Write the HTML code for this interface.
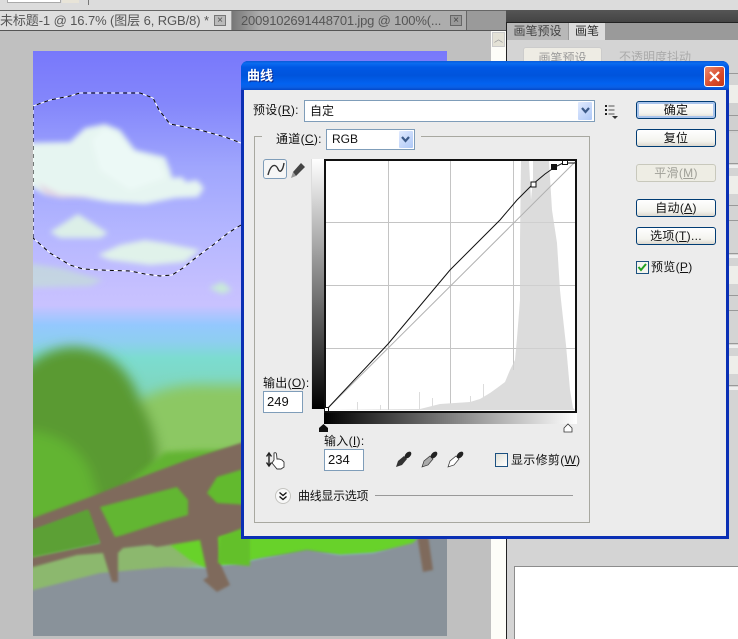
<!DOCTYPE html>
<html><head><meta charset="utf-8"><style>
html,body{margin:0;padding:0;background:#c0c0c0}
#r{position:relative;width:738px;height:639px;overflow:hidden;font:12px/14px "Liberation Sans","WenQuanYi Zen Hei","Noto Sans CJK SC",sans-serif;color:#111}
#r div{position:absolute;box-sizing:border-box;white-space:nowrap}
#r svg{position:absolute;left:0;top:0}
.in{background:#fff;border:1px solid #7f9db9}
.btn{width:80px;height:18px;border:1px solid #003c74;border-radius:3px;background:linear-gradient(#fff,#f3f3ee 70%,#dcd8ce);text-align:center;line-height:16px;left:636px;letter-spacing:.3px}
.dd{width:16px;background:linear-gradient(135deg,#e1eafe,#aec8f7);border:1px solid #fff;border-radius:2px}
.l{letter-spacing:.3px}
u{text-decoration:underline}
</style></head><body><div id="r">
<div style="left:0;top:0;width:738px;height:10px;background:#dcdcdc"></div>
<div style="left:7px;top:0;width:54px;height:3px;background:#fff;border:1px solid #aaa;border-top:0"></div>
<div style="left:62px;top:0;width:17px;height:3px;background:#e8e4d8"></div>
<div style="left:88px;top:0;width:1px;height:5px;background:#777"></div>
<div style="left:0;top:10px;width:506px;height:21px;background:#9a9a9a;border-top:1px solid #666;border-bottom:1px solid #555"></div>
<div style="left:0;top:11px;width:231px;height:19px;background:#dedede;color:#555;font-size:13px;line-height:20px;letter-spacing:-.1px">未标题-1 @ 16.7% (图层 6, RGB/8) *</div>
<div style="left:214px;top:15px;width:12px;height:11px;background:#bbb;border:1px solid #777;color:#555;font-size:10px;line-height:9px;text-align:center">×</div>
<div style="left:232px;top:11px;width:235px;height:19px;background:linear-gradient(90deg,#777,#adadad 12%,#adadad);color:#555;font-size:13px;line-height:20px;padding-left:9px;border-right:1px solid #666;letter-spacing:-.17px">2009102691448701.jpg @ 100%(...</div>
<div style="left:450px;top:15px;width:12px;height:11px;background:#999;border:1px solid #666;color:#444;font-size:10px;line-height:9px;text-align:center">×</div>
<div style="left:0;top:31px;width:491px;height:608px;background:#c0c0c0"></div>

<svg width="738" height="639" viewBox="0 0 738 639">
<defs>
<linearGradient id="sky" x1="0" y1="0" x2="0" y2="1">
<stop offset="0" stop-color="#7878fb"/><stop offset=".09" stop-color="#8487fb"/><stop offset=".2" stop-color="#a0a6fd"/><stop offset=".31" stop-color="#b4b6ff"/><stop offset=".41" stop-color="#c6c0ff"/><stop offset=".435" stop-color="#c8c2ff"/><stop offset=".468" stop-color="#94c8fe"/><stop offset=".497" stop-color="#8ecef0"/><stop offset=".525" stop-color="#7cdcd0"/><stop offset=".6" stop-color="#80d4b8"/><stop offset="1" stop-color="#80d4b8"/>
</linearGradient>
<filter id="b6" x="-20%" y="-20%" width="140%" height="140%"><feGaussianBlur stdDeviation="6"/></filter>
<filter id="b3" x="-20%" y="-20%" width="140%" height="140%"><feGaussianBlur stdDeviation="3"/></filter>
<filter id="b2" x="-20%" y="-20%" width="140%" height="140%"><feGaussianBlur stdDeviation="2.6"/></filter>
<filter id="b1" x="-20%" y="-20%" width="140%" height="140%"><feGaussianBlur stdDeviation="1.4"/></filter>
<clipPath id="img"><rect x="33" y="51" width="414" height="585"/></clipPath>
</defs>
<g clip-path="url(#img)">
<rect x="33" y="51" width="414" height="585" fill="url(#sky)"/>
<!-- clouds -->
<g filter="url(#b2)">
<path d="M20 143 L70 142 L85 128 L105 124 L120 130 L135 150 L165 157 L170 170 L172 178 L182 177 L186 182 L197 180 L204 188 L198 197 L175 198 L145 204 L110 202 L85 198 L60 197 L45 195 L20 180Z" fill="#e6f5f1"/>
<path d="M92 140 L105 128 L118 135 L130 150 L160 162 L165 178 L130 190 L100 170Z" fill="#ecf9f6"/>
<path d="M38 183 L60 194 L100 197 L60 198 L45 195Z" fill="#e2d6e4"/>
<path d="M50 232 L78 214 L108 233 L100 238 L60 238Z" fill="#dcefe8"/>
<path d="M98 255 L120 245 L145 240 L165 243 L200 250 L185 262 L150 265 L110 260Z" fill="#e0f2ea"/>
<path d="M33 264 L60 268 L103 280 L90 286 L20 288 L20 264Z" fill="#c4dcd8" opacity=".75"/>
<path d="M209 288 L222 282 L232 290 L222 294Z" fill="#c8ead8"/>
</g>
<!-- hills -->
<g filter="url(#b6)">
<path d="M140 400 Q170 383 210 385 L460 385 L460 520 L130 520Z" fill="#8cc864"/>
<path d="M15 380 Q40 347 75 347 Q122 350 140 400 Q165 440 158 490 L120 520 L15 530Z" fill="#5a9a32"/>
<path d="M15 430 Q70 430 90 470 L102 510 L15 530Z" fill="#62b432"/>
</g>
<path d="M125 485 L165 452 L200 450 L250 450 L250 520 L130 530Z" fill="#62b432" filter="url(#b3)"/>
<path d="M20 530 L95 505 L112 540 L20 560Z" fill="#5ca034" filter="url(#b3)"/>
<path d="M90 510 L190 480 L210 520 L110 545Z" fill="#62b630" filter="url(#b1)"/>
<path d="M210 480 L460 400 L460 545 L210 560Z" fill="#62ba2e" filter="url(#b1)"/>
<path d="M15 555 L100 545 L175 540 L210 565 L15 600Z" fill="#8cb86e" filter="url(#b2)"/>
<path d="M170 545 L200 530 L420 520 L420 545 L373 553 L340 555 L307 550 L263 558 L240 563 L205 568 L190 560Z" fill="#68d22c" filter="url(#b1)"/>
<path d="M15 595 L33 590 L100 573 L167 567 L205 568 L240 563 L263 558 L307 550 L340 555 L373 553 L413 543 L425 530 L460 520 L460 650 L15 650Z" fill="#89929a" filter="url(#b1)"/>
<!-- fence -->
<g fill="#7f6b5c" filter="url(#b1)">
<path d="M15 526 L33 518 L90 497 L133 480 L187 460 L250 440 L250 530 L218 537 L220 563 L230 585 L217 592 L203 580 L208 577 L200 540 L157 547 L150 545 L123 548 L118 553 L118 582 L112 582 L103 553 L77 555 L33 567 L15 570 L15 560 L33 557 L100 543 L88 510 L33 530 L15 537Z"/>
<path d="M417 535 L428 535 L433 570 L423 572Z"/>
</g>
<g filter="url(#b1)">
<path d="M100 507 L177 487 L188 500 L188 515 L163 522 L123 535 L115 537Z" fill="#62b630"/>
<path d="M207 493 L217 477 L250 467 L250 505 L217 503Z" fill="#62ba2e"/>
<path d="M220 537 L250 525 L250 566 L218 563Z" fill="#64c02c"/>
<path d="M33 530 L88 510 L100 543 L33 557 L20 560 L20 535Z" fill="#5ca034"/>
</g>
<!-- selection -->
<g fill="none">
<path d="M33 238 L33 106 L50 100 L70 96 L80 93 L140 93 L153 98 L159 110 L170 124 L200 130 L225 137 L241 143 M241 225 L228 233 L213 245 L198 256 L183 268 L172 275 L160 276 L145 274 L130 271 L100 270 L83 269 L70 265 L50 253 L33 238" stroke="#fff"/>
<path d="M33 238 L33 106 L50 100 L70 96 L80 93 L140 93 L153 98 L159 110 L170 124 L200 130 L225 137 L241 143 M241 225 L228 233 L213 245 L198 256 L183 268 L172 275 L160 276 L145 274 L130 271 L100 270 L83 269 L70 265 L50 253 L33 238" stroke="#000" stroke-dasharray="4 4"/>
</g>
</g>
</svg>

<!-- scrollbar + panel -->
<div style="left:491px;top:31px;width:15px;height:608px;background:#fdfdf8"></div>
<div style="left:492px;top:32px;width:13px;height:15px;background:#e4e2d6;border:1px solid #ccc;color:#999;font-size:9px;line-height:12px;text-align:center">︿</div>
<div style="left:506px;top:10px;width:232px;height:13px;background:linear-gradient(#555,#444);border-bottom:1px solid #222"></div>
<div style="left:506px;top:23px;width:232px;height:17px;background:#9a9a9a"></div>
<div style="left:506px;top:23px;width:1px;height:616px;background:#222"></div>
<div style="left:507px;top:23px;width:61px;height:17px;background:#b8b8b8;color:#444;text-align:center;line-height:17px">画笔预设</div>
<div style="left:569px;top:23px;width:36px;height:17px;background:#dcdcdc;color:#333;text-align:center;line-height:17px">画笔</div>
<div style="left:507px;top:40px;width:231px;height:599px;background:#d4d4d4"></div>
<div style="left:523px;top:47px;width:79px;height:20px;background:#eeece4;border:1px solid #ccc;border-radius:3px;color:#999;text-align:center;line-height:20px">画笔预设</div>
<div style="left:619px;top:49px;color:#aaa;line-height:16px">不透明度抖动</div>
<div style="left:514px;top:566px;width:224px;height:73px;background:#fff;border:1px solid #8c8c8c;border-right:0;border-bottom:0"></div>
<!-- right strip -->
<div style="left:729px;top:73px;width:9px;height:1px;background:#999"></div>
<div style="left:729px;top:85px;width:9px;height:18px;background:#eeeeea"></div>
<div style="left:729px;top:103px;width:9px;height:30px;background:#d0d0d0"></div>
<div style="left:729px;top:115px;width:9px;height:1px;background:#999"></div>
<div style="left:729px;top:130px;width:9px;height:1px;background:#999"></div>
<div style="left:729px;top:163px;width:9px;height:1px;background:#999"></div>
<div style="left:729px;top:165px;width:9px;height:3px;background:#eee"></div>
<div style="left:729px;top:176px;width:9px;height:18px;background:#eeeeea"></div>
<div style="left:729px;top:205px;width:9px;height:1px;background:#999"></div>
<div style="left:729px;top:220px;width:9px;height:1px;background:#999"></div>
<div style="left:729px;top:253px;width:9px;height:1px;background:#999"></div>
<div style="left:729px;top:255px;width:9px;height:3px;background:#eee"></div>
<div style="left:729px;top:266px;width:9px;height:18px;background:#eeeeea"></div>
<div style="left:729px;top:295px;width:9px;height:1px;background:#999"></div>
<div style="left:729px;top:310px;width:9px;height:1px;background:#999"></div>
<div style="left:729px;top:343px;width:9px;height:1px;background:#999"></div>
<div style="left:729px;top:345px;width:9px;height:3px;background:#eee"></div>
<div style="left:729px;top:356px;width:9px;height:18px;background:#eeeeea"></div>
<div style="left:729px;top:385px;width:9px;height:1px;background:#999"></div>
<div style="left:729px;top:387px;width:9px;height:3px;background:#eee"></div>

<!-- dialog -->
<div style="left:241px;top:61px;width:488px;height:478px;background:#0a2fb4;border-radius:7px 7px 0 0"></div>
<div style="left:241px;top:61px;width:488px;height:29px;border-radius:7px 7px 0 0;background:linear-gradient(#0a5ad8 0,#0a6cf0 8%,#0058e4 22%,#0054dc 50%,#0262f0 78%,#0a60e6 90%,#0448c8 100%)"></div>
<div style="left:247px;top:68px;color:#fff;font-weight:bold;font-size:13px;line-height:16px;text-shadow:1px 1px 0 #0a2a90">曲线</div>
<div style="left:704px;top:66px;width:21px;height:21px;border-radius:3px;border:1px solid #fff;background:linear-gradient(135deg,#ea8a6c,#d8492a 60%,#c23a18)"></div>
<svg width="738" height="639" viewBox="0 0 738 639"><path d="M710 72 L719 81 M719 72 L710 81" stroke="#fff" stroke-width="2.2"/></svg>
<div style="left:244px;top:90px;width:482px;height:446px;background:#ececec"></div>

<div class="l" style="left:253px;top:103px">预设(<u>R</u>):</div>
<div class="in" style="left:304px;top:100px;width:291px;height:22px;line-height:20px;padding-left:5px">自定</div>
<div class="dd" style="left:577px;top:101px;height:20px"></div>

<div style="left:254px;top:136px;width:336px;height:387px;border:1px solid #a8a8a0"></div>
<div style="left:262px;top:130px;width:159px;height:14px;background:#ececec"></div>
<div class="l" style="left:276px;top:132px">通道(<u>C</u>):</div>
<div class="in" style="left:326px;top:129px;width:89px;height:21px;line-height:19px;padding-left:5px;background:#fff">RGB</div>
<div class="dd" style="left:398px;top:130px;height:19px"></div>

<div style="left:263px;top:159px;width:24px;height:20px;background:#f6f6f6;border:1px solid #7f9db9;border-radius:3px"></div>
<div style="left:311px;top:159px;width:13px;height:250px;background:linear-gradient(#fff,#000);border-left:1px solid #ddd"></div>
<div style="left:324px;top:159px;width:253px;height:254px;background:#fff;border:2px solid #111"></div>
<div style="left:324px;top:413px;width:253px;height:11px;background:linear-gradient(90deg,#000,#fff)"></div>

<svg width="738" height="639" viewBox="0 0 738 639">
<g fill="none" stroke="#c4c4c4"><path d="M388.500 161V410M450.500 161V410M513.500 161V410M326 222.500H575M326 285.500H575M326 348.500H575"/></g>
<path fill="#dcdcdc" d="M326 410 L420 409 L440 404 L470 402 L480 399 L490 393 L497 388 L505 382 L510 370 L515 360 L517 338 L520 300 L520 240 L521 161 L529 161 L531 200 L533 178 L549 161 L552 210 L557 243 L560 290 L561 300 L566 345 L570 390 L573 408 L575 410Z"/>
<path fill="#dcdcdc" d="M533 161H549V178H533Z"/>
<path d="M357.500 402V410M380.500 405V410M419.500 392V410M432.500 398V410M470.500 396V404M483.500 384V400" stroke="#dcdcdc" fill="none"/>
<path d="M388.500 390V410M513.500 161V370M326 348.500H575M326 285.500H575M326 222.500H575" stroke="#c4c4c4" fill="none" opacity=".55"/>
<path d="M327 409 L575 162" stroke="#b0b0b0" fill="none"/>
<path d="M327 409 L388 344 L450 270 L470 250 L500 220 L517 200 L533 184 L545 174 L555 167 L563 163 L575 163" stroke="#111" fill="none"/>
<rect x="324.500" y="407.500" width="4" height="4" fill="#fff" stroke="#111"/>
<rect x="531" y="182" width="5" height="5" fill="#fff" stroke="#111"/>
<rect x="551" y="164" width="6" height="6" fill="#111"/>
<rect x="562.500" y="160.500" width="5" height="4" fill="#fff" stroke="#111"/>
<!-- curve tool -->
<path d="M268 175 C271 163 276 164 278 169 C280 174 283 170 284 163" fill="none" stroke="#333" stroke-width="1.4"/>
<path d="M293 172 L301 163 L305 167 L296 176Z" fill="#444"/>
<path d="M291 178 L293 172 L296 176Z" fill="#999"/>
<!-- list icon -->
<path d="M605 106h2M605 110h2M605 114h2" stroke="#222" stroke-width="2"/><path d="M608.500 106h6M608.500 110h6M608.500 114h6" stroke="#555"/>
<path d="M612 116h6l-3 3z" fill="#333"/>
<!-- select arrows -->
<path d="M582 108 L585.500 112 L589 108" fill="none" stroke="#3c5a88" stroke-width="2.2"/>
<path d="M402 137 L405.500 141 L409 137" fill="none" stroke="#3c5a88" stroke-width="2.2"/>
<!-- sliders -->
<path d="M319 432 L319 428 L323.500 424 L328 428 L328 432Z" fill="#111"/>
<path d="M564 432 L564 428 L568 424 L572 428 L572 432Z" fill="#fff" stroke="#333" stroke-width=".8"/>
<!-- hand -->
<path d="M269 454V465M266.500 456.500L269 453L271.500 456.500M266.500 462.500L269 466L271.500 462.500" fill="none" stroke="#222" stroke-width="1.4"/>
<path d="M274 460 L274 453 Q276 452 276.500 454 L277 459 L279 459 L282 460 L284 462 L284 467 L281 469 L277 469 L272 463Z" fill="#fff" stroke="#333" stroke-width=".9"/>
<!-- droppers -->
<g>
<path d="M396 467 L398 461 L404 456 L407 459 L402 465Z" fill="#333"/><ellipse cx="408" cy="455" rx="4" ry="2.500" fill="#222" transform="rotate(-45 408 455)"/>
<path d="M422 467 L424 461 L430 456 L433 459 L428 465Z" fill="#aaa" stroke="#333" stroke-width=".7"/><ellipse cx="434" cy="455" rx="4" ry="2.500" fill="#222" transform="rotate(-45 434 455)"/>
<path d="M448 467 L450 461 L456 456 L459 459 L454 465Z" fill="#fff" stroke="#333" stroke-width=".7"/><ellipse cx="460" cy="455" rx="4" ry="2.500" fill="#222" transform="rotate(-45 460 455)"/>
</g>
<!-- toggle -->
<circle cx="283" cy="496" r="7.500" fill="#f8f8f8" stroke="#c4c4c0"/>
<path d="M279.500 492.500L283 495.500L286.500 492.500M279.500 496.500L283 499.500L286.500 496.500" fill="none" stroke="#111" stroke-width="1.3"/>
<path d="M375 495.500H573" stroke="#999"/>
</svg>

<div class="l" style="left:263px;top:376px">输出(<u>O</u>):</div>
<div class="in" style="left:263px;top:391px;width:40px;height:22px;line-height:20px;padding-left:3px;font-size:13px">249</div>
<div class="l" style="left:324px;top:434px">输入(<u>I</u>):</div>
<div class="in" style="left:324px;top:449px;width:40px;height:22px;line-height:20px;padding-left:3px;font-size:13px">234</div>
<div style="left:495px;top:453px;width:13px;height:14px;border:1px solid #1c5180;background:linear-gradient(135deg,#e0e0d8,#fff)"></div>
<div class="l" style="left:511px;top:453px">显示修剪(<u>W</u>)</div>
<div style="left:298px;top:489px;letter-spacing:-.3px">曲线显示选项</div>

<div class="btn" style="top:101px;border:1px solid #003c74;box-shadow:inset 0 0 0 2px #a8c4ec">确定</div>
<div class="btn" style="top:129px">复位</div>
<div class="btn" style="top:164px;border-color:#c8c8bc;background:#eeede4;color:#a0a098">平滑(<u>M</u>)</div>
<div class="btn" style="top:199px">自动(<u>A</u>)</div>
<div class="btn" style="top:227px">选项(<u>T</u>)...</div>
<div style="left:636px;top:261px;width:13px;height:13px;border:1px solid #1c5180;background:#f4f4ee"></div>
<svg width="738" height="639" viewBox="0 0 738 639"><path d="M638.500 267 L641 270 L646 264" fill="none" stroke="#21a121" stroke-width="2"/></svg>
<div class="l" style="left:651px;top:260px">预览(<u>P</u>)</div>
</div></body></html>
